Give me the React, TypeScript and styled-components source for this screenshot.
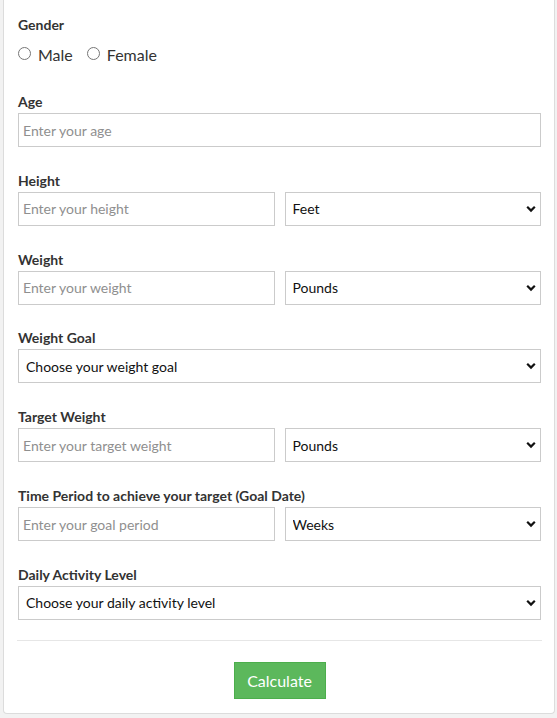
import React from "react";
import styled, { createGlobalStyle } from "styled-components";

const Global = createGlobalStyle`
  html, body { margin: 0; padding: 0; background: #f2f2f2; }
  body { font-family: Lato, "Open Sans", sans-serif; color: #333; }
  * { box-sizing: border-box; }
`;

const Page = styled.div`
  padding: 0 2px 4px 3px;
`;

const Card = styled.form`
  background: #fff;
  border: 1px solid #dcdcdc;
  border-top: none;
  border-radius: 0 0 4px 4px;
  padding: 15px 13px 14px 14px;
`;

const Group = styled.div`
  margin-bottom: 23.83px;
`;

const Label = styled.div`
  font-size: 14px;
  font-weight: 700;
  line-height: 20px;
  color: #333;
  margin-bottom: 1px;
`;

const RadioRow = styled.div`
  display: flex;
  align-items: center;
  gap: 14px;
  margin-top: 9px;
  margin-bottom: 26px;
  height: 22px;
`;

const RadioLabel = styled.label`
  display: flex;
  align-items: center;
  font-size: 16px;
  color: #333;
  line-height: 22px;
  input {
    margin: 0 7px 4px 0;
    width: 13px;
    height: 13px;
  }
`;

const Row = styled.div<{ $cols: number }>`
  display: grid;
  grid-template-columns: ${(p) => (p.$cols === 2 ? "1fr 1fr" : "1fr")};
  gap: 10px;
`;

const TextInput = styled.input`
  display: block;
  width: 100%;
  height: 34px;
  border: 1px solid #cbcbcb;
  border-radius: 0;
  padding: 0 4px;
  font-family: Lato, sans-serif;
  font-size: 14px;
  color: #333;
  outline: none;
  &::placeholder { color: #8f8f8f; }
`;

const SelectWrap = styled.div`
  position: relative;
`;

const Select = styled.select`
  display: block;
  width: 100%;
  height: 34px;
  border: 1px solid #cbcbcb;
  border-radius: 0;
  padding: 0 28px 0 7px;
  font-family: Lato, sans-serif;
  font-size: 14px;
  color: #111;
  background: #fff;
  appearance: none;
  -webkit-appearance: none;
  outline: none;
`;

const Chevron = styled.svg`
  position: absolute;
  right: 5px;
  top: 13px;
  width: 10px;
  height: 8px;
  pointer-events: none;
`;

const Divider = styled.hr`
  border: none;
  border-top: 1px solid #e6e6e6;
  margin: -3.83px -1px 21px -1px;
`;

const ButtonRow = styled.div`
  display: flex;
  justify-content: center;
`;

const Button = styled.button`
  background: #5cb85c;
  border: 1px solid #4cae4c;
  color: #fff;
  font-family: Lato, sans-serif;
  font-size: 16px;
  height: 37px;
  width: 92px;
  border-radius: 0;
  cursor: pointer;
`;

const SelectBox: React.FC<{ value: string }> = ({ value }) => (
  <SelectWrap>
    <Select defaultValue={value}>
      <option>{value}</option>
    </Select>
    <Chevron viewBox="0 0 10 8">
      <path d="M1.2 1.8 L5 5.6 L8.8 1.8" fill="none" stroke="#111" strokeWidth="2.2" />
    </Chevron>
  </SelectWrap>
);

export default function App() {
  return (
    <Page>
      <Global />
      <Card onSubmit={(e) => e.preventDefault()}>
        <Label>Gender</Label>
        <RadioRow>
          <RadioLabel>
            <input type="radio" name="g" />
            Male
          </RadioLabel>
          <RadioLabel>
            <input type="radio" name="g" />
            Female
          </RadioLabel>
        </RadioRow>

        <Group>
          <Label>Age</Label>
          <Row $cols={1}>
            <TextInput placeholder="Enter your age" />
          </Row>
        </Group>

        <Group>
          <Label>Height</Label>
          <Row $cols={2}>
            <TextInput placeholder="Enter your height" />
            <SelectBox value="Feet" />
          </Row>
        </Group>

        <Group>
          <Label>Weight</Label>
          <Row $cols={2}>
            <TextInput placeholder="Enter your weight" />
            <SelectBox value="Pounds" />
          </Row>
        </Group>

        <Group>
          <Label>Weight Goal</Label>
          <Row $cols={1}>
            <SelectBox value="Choose your weight goal" />
          </Row>
        </Group>

        <Group>
          <Label>Target Weight</Label>
          <Row $cols={2}>
            <TextInput placeholder="Enter your target weight" />
            <SelectBox value="Pounds" />
          </Row>
        </Group>

        <Group>
          <Label>Time Period to achieve your target (Goal Date)</Label>
          <Row $cols={2}>
            <TextInput placeholder="Enter your goal period" />
            <SelectBox value="Weeks" />
          </Row>
        </Group>

        <Group>
          <Label>Daily Activity Level</Label>
          <Row $cols={1}>
            <SelectBox value="Choose your daily activity level" />
          </Row>
        </Group>

        <Divider />
        <ButtonRow>
          <Button type="submit">Calculate</Button>
        </ButtonRow>
      </Card>
    </Page>
  );
}
